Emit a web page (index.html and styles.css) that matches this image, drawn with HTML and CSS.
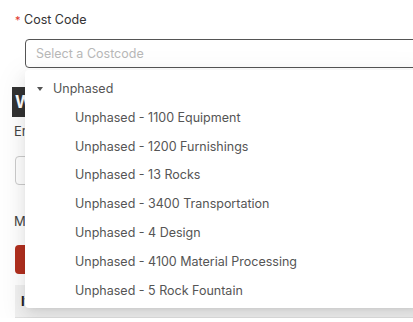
FILE: index.html
```html
<!DOCTYPE html>
<html lang="en">
<head>
  <meta charset="UTF-8">
  <title>Cost Code</title>
  <link rel="stylesheet" href="styles.css">
</head>
<body>

  <div class="page">
    <div class="field">
      <label class="field-label"><span class="req">*</span> Cost Code</label>
      <div class="select-wrap">
        <div class="select">Select a Costcode</div>

        <div class="dropdown">
          <div class="group"><span class="caret"></span>Unphased</div>
          <div class="option">Unphased - 1100 Equipment</div>
          <div class="option">Unphased - 1200 Furnishings</div>
          <div class="option">Unphased - 13 Rocks</div>
          <div class="option">Unphased - 3400 Transportation</div>
          <div class="option">Unphased - 4 Design</div>
          <div class="option">Unphased - 4100 Material Processing</div>
          <div class="option">Unphased - 5 Rock Fountain</div>
        </div>
      </div>
    </div>

    <div class="behind">
      <div class="section-head">Work Items</div>
      <div class="small-label">Enter a description</div>
      <div class="text-box"></div>
      <div class="small-label spaced">Material</div>
      <button class="red-btn">Add</button>
      <div class="table-head">Item</div>
    </div>
  </div>

</body>
</html>
```

FILE: styles.css
```css
body {
  margin: 0;
  font-family: Inter, "Liberation Sans", Arial, sans-serif;
  background-color: #fff;
  overflow: hidden;
}
.page {
  padding-top: 10px;
  width: 440px;
}
.field-label {
  display: block;
  padding-left: 15px;
  font-size: 12.5px;
  line-height: 20px;
  color: #333;
  margin-bottom: 9px;
}
.req {
  color: #e0342b;
  font-size: 11px;
}
.select-wrap {
  position: relative;
  margin-left: 25px;
}
.select {
  height: 29px;
  box-sizing: border-box;
  border: 1px solid #555;
  border-radius: 4px;
  padding-left: 10px;
  font-size: 12.5px;
  line-height: 27px;
  color: #b8b8b8;
  background: #fff;
}
.dropdown {
  position: absolute;
  top: 31px;
  left: 0;
  width: 400px;
  padding: 5px 0 3px;
  background: #fff;
  border-radius: 4px;
  box-shadow: 0 3px 6px -4px rgba(0,0,0,.12), 0 6px 16px 0 rgba(0,0,0,.08), 0 9px 28px 8px rgba(0,0,0,.05);
  z-index: 10;
  font-size: 12.5px;
  color: #555;
}
.group, .option {
  height: 28.8px;
  line-height: 28.8px;
  white-space: nowrap;
}
.group {
  padding-left: 12px;
}
.caret {
  display: inline-block;
  width: 0;
  height: 0;
  border-left: 3.5px solid transparent;
  border-right: 3.5px solid transparent;
  border-top: 4px solid #555;
  vertical-align: middle;
  margin-right: 10px;
  position: relative;
  top: -1px;
}
.option {
  padding-left: 50px;
}
.behind {
  padding-left: 15px;
  width: 398px;
}
.section-head {
  margin-top: 19px;
  margin-left: -3px;
  height: 30px;
  line-height: 30px;
  background: #333;
  color: #fff;
  font-weight: bold;
  font-size: 17px;
  padding-left: 3px;
}
.small-label {
  margin-top: 5px;
  font-size: 13px;
  line-height: 18px;
  color: #444;
  margin-left: -1px;
}
.small-label.spaced {
  margin-top: 27px;
}
.text-box {
  margin-top: 16px;
  height: 29px;
  border: 1px solid #ccc;
  border-radius: 4px;
  box-sizing: border-box;
}
.red-btn {
  display: block;
  margin-top: 15px;
  width: 120px;
  height: 29px;
  border: none;
  border-radius: 4px;
  background-color: #b3301f;
  color: #fff;
}
.table-head {
  margin-top: 11px;
  height: 33px;
  box-sizing: border-box;
  background: #f2f2f2;
  border-bottom: 1px solid #e2e2e2;
  padding-left: 6px;
  line-height: 32px;
  font-size: 13px;
  font-weight: bold;
  color: #222;
}
```
